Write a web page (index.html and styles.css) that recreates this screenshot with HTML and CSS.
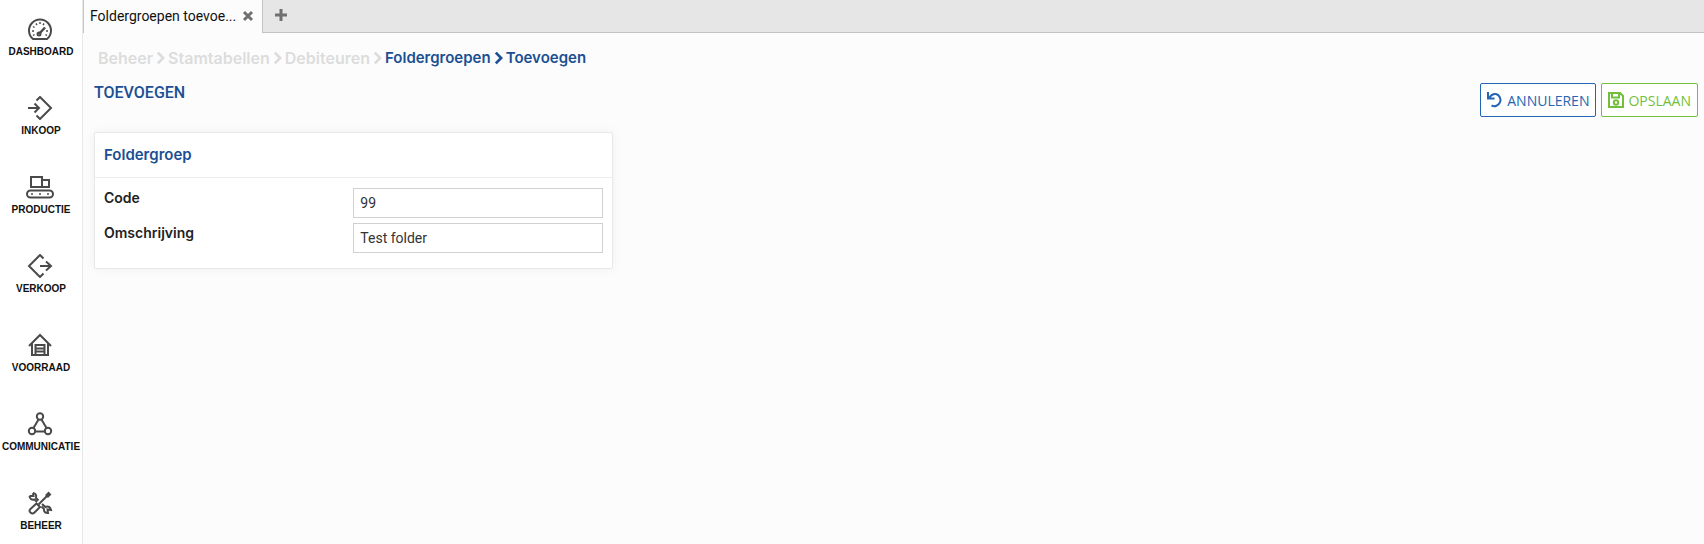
FILE: index.html
```
<!DOCTYPE html>
<html lang="nl">
<head>
  <meta charset="UTF-8">
  <meta name="viewport" content="width=device-width, initial-scale=1.0">
  <title>Foldergroepen toevoegen</title>
  <link rel="stylesheet" href="styles.css">
</head>
<body>
  <nav class="sidebar">
    <a href="#dashboard">
      <svg viewBox="0 0 28 24">
        <path d="M7 22 A11 11 0 1 1 21 22 Z"/>
        <path d="M13 17 L19 10.5" stroke-width="2.5"/>
        <circle cx="13" cy="17" r="1.5"/>
        <path stroke-width="1.5" d="M6 14h2M20 14h2M7 9.5l1.5 1M10 6.5l1 1.5M14 5v2M18 6.500l-1 1.5M7 18.5l1.5-1M21 18.5l-1.5-1"/>
      </svg>
      <span>DASHBOARD</span>
    </a>
    <a href="#inkoop">
      <svg viewBox="0 0 28 24">
        <path d="M10.5 4.5 L14 1 L25 12 L14 23 L10.5 19.5 M2 12 H13 M8.5 7.5 L13 12 L8.5 16.5"/>
      </svg>
      <span>INKOOP</span>
    </a>
    <a href="#productie">
      <svg viewBox="0 0 28 24">
        <path d="M5 12 V2 H16 V12 M16 5 H23 V12 M4 12 H24"/>
        <rect x="1" y="15.5" width="26" height="7" rx="3.5"/>
        <path stroke-linecap="round" d="M6 19h0M14 19h0M22 19h0"/>
      </svg>
      <span>PRODUCTIE</span>
    </a>
    <a href="#verkoop">
      <svg viewBox="0 0 28 24">
        <path d="M17.5 4.5 L14 1 L3 12 L14 23 L17.5 19.5 M14 12 H25 M20 7.5 L25 12 L20 16.5"/>
      </svg>
      <span>VERKOOP</span>
    </a>
    <a href="#voorraad">
      <svg viewBox="0 0 28 24">
        <path d="M3 13 L14 2 L25 13 M6 10.5 V22 H22 V10.5"/>
        <path d="M9.5 22 V12 H18.5 V22 M9.5 15.5 H18.5 M9.5 18.5 H18.5"/>
      </svg>
      <span>VOORRAAD</span>
    </a>
    <a href="#communicatie">
      <svg viewBox="0 0 28 24">
        <circle cx="14" cy="4.5" r="3.2"/>
        <circle cx="6" cy="19" r="3.2"/>
        <circle cx="22" cy="19" r="3.2"/>
        <path d="M12.5 7.5 L7.5 16 M15.5 7.5 L20.5 16 M9.5 19.5 H18.5"/>
      </svg>
      <span>COMMUNICATIE</span>
    </a>
    <a href="#beheer">
      <svg viewBox="0 0 28 24">
        <path d="M22 4 L12.5 13.5"/>
        <path d="M20.500 5.5 L24 2" stroke-width="4"/>
        <path d="M10.5 12.5 L14 16 L8.5 21.5 Q6.500 23.5 4.5 21.5 T4.5 18 Z"/>
        <path d="M7 2 Q11 2.500 10 7 L12.5 9.500 M3.500 5 Q4 9.5 8.5 8.500 L11 11" />
        <path d="M7 2 L7.5 5 L3.5 5"/>
        <path d="M16 13 L19.5 16 Q24 14.5 25 19 L21.5 18.5 L22 22 Q17.5 22 18 18 L15.500 15.5"/>
      </svg>
      <span>BEHEER</span>
    </a>
  </nav>

  <div class="page">
    <div class="tabs">
      <div class="tab">
        <span class="tab-title">Foldergroepen toevoe...</span>
        <button type="button" aria-label="Tabblad sluiten">
          <svg viewBox="0 0 12 12"><path d="M2 2 L10 10 M10 2 L2 10"/></svg>
        </button>
      </div>
      <button type="button" class="add-tab" aria-label="Nieuw tabblad">
        <svg viewBox="0 0 12 12"><path d="M6 0 V12 M0 6 H12"/></svg>
      </button>
    </div>

    <main>
      <nav class="breadcrumb">
        <a href="#beheer">Beheer</a>
        <svg viewBox="0 0 10 14"><path d="M2 1 L8 7 L2 13"/></svg>
        <a href="#stamtabellen">Stamtabellen</a>
        <svg viewBox="0 0 10 14"><path d="M2 1 L8 7 L2 13"/></svg>
        <a href="#debiteuren">Debiteuren</a>
        <svg viewBox="0 0 10 14"><path d="M2 1 L8 7 L2 13"/></svg>
        <a href="#foldergroepen" class="active">Foldergroepen</a>
        <svg class="active" viewBox="0 0 10 14"><path d="M2 1 L8 7 L2 13"/></svg>
        <a href="#toevoegen" class="active">Toevoegen</a>
      </nav>

      <div class="page-header">
        <h1>TOEVOEGEN</h1>
        <div class="actions">
          <button type="button" class="btn btn-cancel">
            <svg viewBox="0 0 16 16"><path d="M1 0 V6.5 H7.5 M2 6 Q5 1.5 9 2 A6.2 6.2 0 1 1 4.5 13.5"/></svg>
            ANNULEREN
          </button>
          <button type="submit" form="folder-form" class="btn btn-save">
            <svg viewBox="0 0 16 16">
              <path d="M1 1 H12 L15 4 V15 H1 Z M4 1 V5.5 H11 V1"/>
              <circle cx="8" cy="10.5" r="2.2"/>
            </svg>
            OPSLAAN
          </button>
        </div>
      </div>

      <div class="cards">
        <form class="card" id="folder-form">
          <h2>Foldergroep</h2>
          <div class="fields">
            <label for="code">Code</label>
            <input type="text" id="code" value="99">
            <label for="omschrijving">Omschrijving</label>
            <input type="text" id="omschrijving" value="Test folder">
          </div>
        </form>
      </div>
    </main>
  </div>
</body>
</html>
```
FILE: styles.css
```
* {
  box-sizing: border-box;
}

body {
  margin: 0;
  min-height: 100vh;
  display: flex;
  font-family: Roboto, Arial, sans-serif;
  font-size: 14px;
  color: #222;
  background-color: #fcfcfc;
}

svg {
  display: block;
  flex: none;
  fill: none;
  stroke: currentColor;
  stroke-width: 2;
}

a {
  text-decoration: none;
}

button {
  padding: 0;
  border: none;
  background: none;
  font: inherit;
  cursor: pointer;
}

.sidebar {
  flex: none;
  width: 83px;
  padding-top: 17px;
  display: flex;
  flex-direction: column;
  gap: 37px;
  background-color: #fff;
  border-right: 1px solid #e8e8e8;
}

.sidebar a {
  display: flex;
  flex-direction: column;
  align-items: center;
  gap: 4px;
  font: bold 10px/14px "Liberation Sans", Arial, sans-serif;
  color: #111;
}

.sidebar svg {
  width: 28px;
  height: 24px;
  margin-right: 2px;
  color: #4a4a4a;
}

.page {
  flex: 1;
  min-width: 0;
}

.tabs {
  height: 33px;
  display: flex;
  background-color: #e6e6e6;
  border-bottom: 1px solid #c4c4c4;
}

.tab {
  width: 180px;
  height: 33px;
  padding: 0 8px 2px 6px;
  display: flex;
  align-items: center;
  justify-content: space-between;
  background-color: #fcfcfc;
  border-left: 1px solid #c4c4c4;
  border-right: 1px solid #c4c4c4;
  color: #111;
}

.tabs button {
  color: #707070;
}

.tabs svg {
  width: 12px;
  height: 12px;
  stroke-width: 3;
}

.add-tab {
  padding: 0 12px 2px;
}

main {
  padding: 15px 6px 16px 11px;
}

.breadcrumb {
  padding-left: 4px;
  display: flex;
  align-items: center;
  gap: 3px;
  line-height: 20px;
  font-family: Inter, Roboto, sans-serif;
  font-size: 16px;
  font-weight: 600;
  color: #dcdcdc;
}

.breadcrumb a {
  color: inherit;
}

.breadcrumb svg {
  width: 9px;
  height: 14px;
  stroke-width: 3;
}

.breadcrumb .active {
  font-size: 15px;
  color: #1b4f93;
}

.page-header {
  margin-top: 15px;
  display: flex;
  justify-content: space-between;
}

h1 {
  margin: 0;
  font-size: 16px;
  font-weight: 500;
  line-height: 20px;
  color: #1b4f93;
}

.actions {
  display: flex;
  gap: 5px;
}

.btn {
  height: 34px;
  padding: 0 6px;
  display: flex;
  align-items: center;
  gap: 4px;
  border: 1px solid currentColor;
  border-radius: 2px;
  background-color: #fff;
  font-family: "Open Sans", Roboto, sans-serif;
}

.btn svg {
  width: 16px;
  height: 16px;
}

.btn-cancel {
  color: #2465b4;
}

.btn-save {
  color: #72bf3b;
}

.cards {
  margin-top: 15px;
  display: grid;
  grid-template-columns: repeat(3, 1fr);
  gap: 24px;
}

.card {
  background-color: #fff;
  border: 1px solid #e8e8e8;
  border-radius: 2px;
  box-shadow: 0 0 12px rgba(0, 0, 0, 0.05);
}

h2 {
  margin: 0;
  padding: 12px 9px;
  border-bottom: 1px solid #ececec;
  font: 600 15px/20px Inter, Roboto, sans-serif;
  color: #1b4f93;
}

.fields {
  padding: 10px 9px 15px;
  display: grid;
  grid-template-columns: 1fr 1fr;
  row-gap: 5px;
}

.fields label {
  font: 600 14px/20px Inter, Roboto, sans-serif;
}

.fields input {
  width: 100%;
  height: 30px;
  padding: 0 6px;
  border: 1px solid #d0d0d0;
  background-color: #fff;
  font: inherit;
  color: #333;
}
```
